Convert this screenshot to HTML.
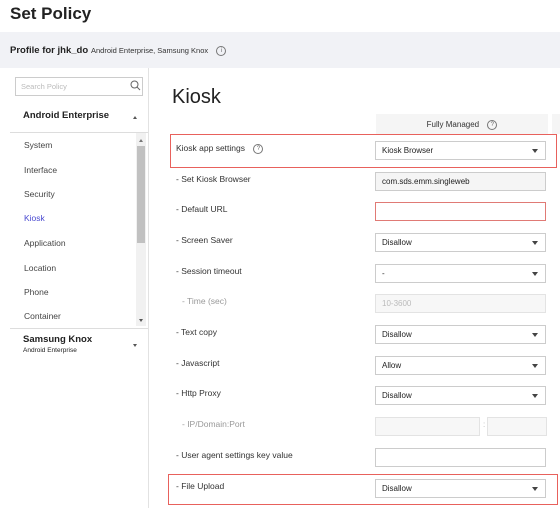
<!DOCTYPE html><html><head><style>
body{margin:0;width:560px;height:508px;overflow:hidden;background:#fff;font-family:"Liberation Sans",sans-serif;color:#222;position:relative}
.a{position:absolute}
.lab{position:absolute;left:176px;font-size:8.5px;color:#333}
.in{position:absolute;left:375px;width:171px;height:19px;border:1px solid #ccc;box-sizing:border-box;font-size:8px;line-height:17px;padding-left:6px;background:#fff}
.dd:after{content:"";position:absolute;right:7px;top:7px;border:3px solid transparent;border-top:4px solid #444}
.mi{position:absolute;left:24px;font-size:8.5px;color:#444}
.q{display:inline-block;width:8px;height:8px;border:1px solid #777;border-radius:50%;font-size:6px;line-height:8px;text-align:center;vertical-align:middle;margin-left:6px;color:#666}
.red{position:absolute;border:1px solid #e8615c}
</style></head><body>
<div class="a" style="left:10px;top:4px;font-size:17px;font-weight:bold">Set Policy</div>
<div class="a" style="left:0;top:32px;width:560px;height:36px;background:#f1f2f6"></div>
<div class="a" style="left:10px;top:45px;font-size:9.5px;font-weight:bold">Profile for jhk_do</div>
<div class="a" style="left:91px;top:46px;font-size:7.5px;color:#333">Android Enterprise, Samsung Knox <span class="q">i</span></div>
<div class="a" style="left:148px;top:68px;width:1px;height:440px;background:#e2e2e2"></div>
<div class="a" style="left:15px;top:77px;width:128px;height:19px;border:1px solid #ccc;box-sizing:border-box;font-size:7.5px;color:#bbb;line-height:17px;padding-left:5px">Search Policy</div>
<svg class="a" style="left:130px;top:80px" width="11" height="11"><circle cx="4.5" cy="4.5" r="3.5" fill="none" stroke="#666" stroke-width="1"/><path d="M7 7l3 3" stroke="#666"/></svg>
<div class="a" style="left:23px;top:110px;font-size:9.5px;font-weight:bold">Android Enterprise</div>
<div class="a" style="left:133px;top:114px;border:2.5px solid transparent;border-bottom:3px solid #555"></div>
<div class="a" style="left:10px;top:132px;width:138px;height:1px;background:#ddd"></div>
<div class="mi" style="top:140px">System</div>
<div class="mi" style="top:165px">Interface</div>
<div class="mi" style="top:189px">Security</div>
<div class="mi" style="top:213px;color:#4a4ad0">Kiosk</div>
<div class="mi" style="top:238px">Application</div>
<div class="mi" style="top:263px">Location</div>
<div class="mi" style="top:287px">Phone</div>
<div class="mi" style="top:311px">Container</div>
<div class="a" style="left:136px;top:133px;width:10px;height:193px;background:#f1f1f1"></div>
<div class="a" style="left:137px;top:146px;width:8px;height:97px;background:#c1c1c1"></div>
<div class="a" style="left:139px;top:137px;border:2.5px solid transparent;border-bottom:3px solid #777"></div>
<div class="a" style="left:139px;top:319px;border:2.5px solid transparent;border-top:3px solid #555"></div>
<div class="a" style="left:10px;top:328px;width:138px;height:1px;background:#ddd"></div>
<div class="a" style="left:23px;top:334px;font-size:9.5px;font-weight:bold">Samsung Knox</div>
<div class="a" style="left:23px;top:347px;font-size:6.5px">Android Enterprise</div>
<div class="a" style="left:133px;top:344px;border:2.5px solid transparent;border-top:3px solid #555"></div>
<div class="a" style="left:172px;top:86px;font-size:20px">Kiosk</div>
<div class="a" style="left:376px;top:114px;width:172px;height:20px;background:#f5f5f5;font-size:8px;text-align:center;line-height:22px;color:#333">Fully Managed <span class="q">?</span></div>
<div class="a" style="left:552px;top:114px;width:8px;height:20px;background:#f5f5f5"></div>
<div class="red" style="left:170px;top:134px;width:385px;height:32px"></div>
<div class="lab" style="top:143px">Kiosk app settings <span class="q">?</span></div>
<div class="in dd" style="top:141px">Kiosk Browser</div>
<div class="lab" style="top:174px">- Set Kiosk Browser</div>
<div class="in" style="top:172px;background:#f5f5f5">com.sds.emm.singleweb</div>
<div class="lab" style="top:204px">- Default URL</div>
<div class="in" style="top:202px;border-color:#e07a75"></div>
<div class="lab" style="top:235px">- Screen Saver</div>
<div class="in dd" style="top:233px">Disallow</div>
<div class="lab" style="top:266px">- Session timeout</div>
<div class="in dd" style="top:264px">-</div>
<div class="lab" style="top:296px;left:182px;color:#999">- Time (sec)</div>
<div class="in" style="top:294px;background:#f7f7f7;color:#bbb;border-color:#e3e3e3">10-3600</div>
<div class="lab" style="top:327px">- Text copy</div>
<div class="in dd" style="top:325px">Disallow</div>
<div class="lab" style="top:358px">- Javascript</div>
<div class="in dd" style="top:356px">Allow</div>
<div class="lab" style="top:388px">- Http Proxy</div>
<div class="in dd" style="top:386px">Disallow</div>
<div class="lab" style="top:419px;left:182px;color:#999">- IP/Domain:Port</div>
<div class="in" style="top:417px;width:105px;background:#f7f7f7;border-color:#e3e3e3"></div>
<div class="a" style="left:483px;top:420px;font-size:8px;color:#bbb">:</div>
<div class="in" style="top:417px;left:487px;width:60px;background:#f7f7f7;border-color:#e3e3e3"></div>
<div class="lab" style="top:450px">- User agent settings key value</div>
<div class="in" style="top:448px"></div>
<div class="red" style="left:168px;top:474px;width:388px;height:29px"></div>
<div class="lab" style="top:481px">- File Upload</div>
<div class="in dd" style="top:479px">Disallow</div>
</body></html>
